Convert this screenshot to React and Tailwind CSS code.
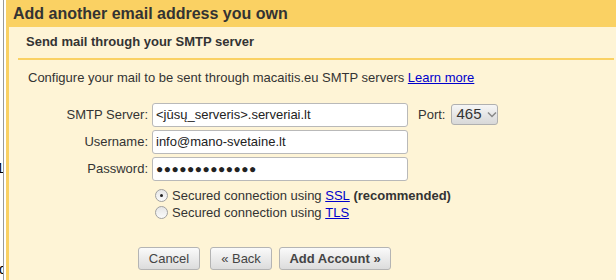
import React from "react";

function Field({ label, children }) {
  return (
    <div className="flex items-center h-[27px]">
      <div className="w-[124px] text-right pr-[4px] text-[13px] text-[#333]">{label}</div>
      {children}
    </div>
  );
}

function Input({ value, dots }) {
  return (
    <div className="w-[256px] h-[24px] bg-white border border-[#b9b9b9] rounded-[3px] flex items-center px-[3px] text-[13px] text-[#222]">
      {dots ? <span className="tracking-[0.5px] text-[12px]">{"●●●●●●●●●●●●●"}</span> : value}
    </div>
  );
}

function Radio({ checked, children }) {
  return (
    <div className="flex items-center h-[17px] text-[13px] text-[#333]">
      <span className="w-[13px] h-[13px] rounded-full border border-[#a0a0a0] bg-gradient-to-b from-[#e6e6e6] to-[#fafafa] flex items-center justify-center mr-[4px]">
        {checked && <span className="w-[3px] h-[3px] rounded-full bg-[#222]" />}
      </span>
      {children}
    </div>
  );
}

function Btn({ children, w, bold }) {
  return (
    <div
      className={`h-[23px] border border-[#b4b4b4] rounded-[3px] bg-gradient-to-b from-[#fafafa] to-[#dcdcdc] flex items-center justify-center text-[13px] text-[#444] ${bold ? "font-bold" : ""} ${w}`}
    >
      {children}
    </div>
  );
}

export default function App() {
  return (
    <div
      className="w-[616px] h-[280px] bg-white flex overflow-hidden relative"
      style={{ fontFamily: '"Liberation Sans", Arial, sans-serif' }}
    >
      <div className="w-[3px] relative overflow-hidden">
        <span className="absolute top-[161px] right-[-1px] text-[14px] leading-none text-black">1</span>
        <span className="absolute top-[262px] left-[-1px] text-[14px] leading-none text-black">d</span>
      </div>
      <div className="w-px bg-[#9a9a9a]" />
      <div className="w-[2px]" />
      <div className="flex-1 flex flex-col">
        <div className="h-[27px] bg-[#fad163] flex items-center pl-[7px] pt-[1px]">
          <span className="text-[16px] font-bold text-[#333] leading-none">Add another email address you own</span>
        </div>
        <div className="flex-1 bg-[#fef4d6] border-l-[3px] border-[#fad163] flex flex-col">
          <div className="ml-[9px] mr-[2px] h-[33px] border-b-2 border-[#fad163] flex items-center pl-[8px] pb-[2px]">
            <span className="text-[13px] font-bold text-[#333]">Send mail through your SMTP server</span>
          </div>
          <div className="pl-[19px] pt-[9px] text-[13px] text-[#333] leading-[17px]">
            Configure your mail to be sent through macaitis.eu SMTP servers{" "}
            <span className="text-[#0000cc] underline">Learn more</span>
          </div>
          <div className="mt-[15px] pl-[19px] flex flex-col">
            <Field label="SMTP Server:">
              <Input value="<jūsų_serveris>.serveriai.lt" />
              <span className="ml-[10px] text-[13px] text-[#333]">Port:</span>
              <div className="ml-[6px] w-[47px] h-[21px] border border-[#b0b0b0] rounded-[3px] bg-gradient-to-b from-[#f6f6f6] to-[#d8d8d8] flex items-center pl-[4px] text-[15px] text-[#333]">
                465
                <svg width="10" height="7" viewBox="0 0 10 7" className="ml-[5px]">
                  <path d="M1 1.5 L5 5.5 L9 1.5" stroke="#888" strokeWidth="1.5" fill="none" />
                </svg>
              </div>
            </Field>
            <Field label="Username:">
              <Input value="info@mano-svetaine.lt" />
            </Field>
            <Field label="Password:">
              <Input dots />
            </Field>
          </div>
          <div className="pl-[146px] mt-[5px] flex flex-col">
            <Radio checked>
              Secured connection using&nbsp;<span className="text-[#0000cc] underline">SSL</span>
              &nbsp;<b>(recommended)</b>
            </Radio>
            <Radio>
              Secured connection using&nbsp;<span className="text-[#0000cc] underline">TLS</span>
            </Radio>
          </div>
          <div className="pl-[129px] mt-[26px] flex">
            <Btn w="w-[62px]">Cancel</Btn>
            <div className="w-[10px]" />
            <Btn w="w-[62px]">« Back</Btn>
            <div className="w-[7px]" />
            <Btn w="w-[112px]" bold>Add Account »</Btn>
          </div>
        </div>
      </div>
    </div>
  );
}
